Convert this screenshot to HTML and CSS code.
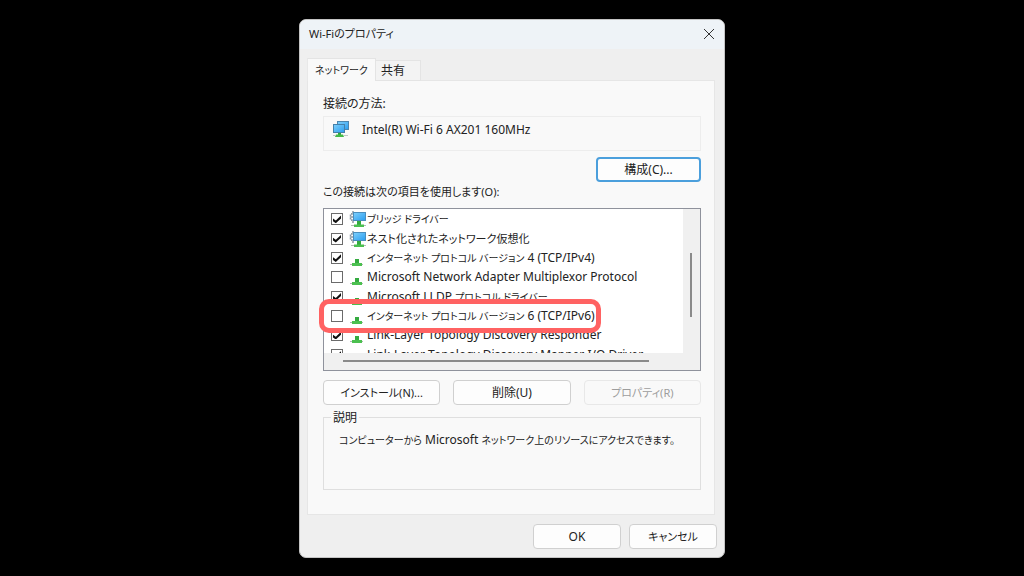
FILE: index.html
```
<!DOCTYPE html>
<html lang="ja">
<head>
    <meta charset="UTF-8">
    <meta name="viewport" content="width=device-width, initial-scale=1.0">
    <title>Wi-Fiのプロパティ</title>
    <link rel="stylesheet" href="styles.css">
</head>
<body>
    <svg class="symbols" aria-hidden="true">
        <defs>
            <linearGradient id="screen" x1="0" y1="0" x2="1" y2="1">
                <stop offset="0" stop-color="#7fd0fb"/>
                <stop offset="1" stop-color="#2a9df0"/>
            </linearGradient>
            <symbol id="adapter" viewBox="0 0 18 18">
                <rect x="5.5" y="1.5" width="11" height="8" fill="url(#screen)" stroke="#4b86b0"/>
                <rect x="1.5" y="4.5" width="11" height="8" fill="url(#screen)" stroke="#4480aa"/>
                <path d="M6 13h3v2H6z" fill="#2fa53a"/>
                <path d="M4 14.500h7l1 2.500H3z" fill="#43ba48"/>
                <path d="M1 15h3v1H1zM12 15h4v1h-4z" fill="#c0c8c4"/>
            </symbol>
            <symbol id="service" viewBox="0 0 18 18">
                <path d="M5 2H3v2H1.500v2H3v2H1.500v2H3v2h2" fill="none" stroke="#8b98a3" stroke-width="1.500" stroke-dasharray="2 1"/>
                <rect x="4.500" y="2.500" width="12" height="8" fill="url(#screen)" stroke="#4b8ebd"/>
                <path d="M8 11h4v4H8z" fill="#35ab40"/>
                <path d="M5 14.500h10V17H5z" fill="#4cc050"/>
                <path d="M2 15h3v1H2zM15 15h2v1h-2z" fill="#b4bcb8"/>
            </symbol>
            <symbol id="protocol" viewBox="0 0 18 18">
                <path d="M6 10h4v4H6z" fill="#35ab40"/>
                <path d="M3 14h10v3H3z" fill="#4cc050"/>
                <path d="M1 15h2v1H1zM13 15h1v1h-1z" fill="#aeb8b0"/>
            </symbol>
        </defs>
    </svg>

    <main class="dialog">
        <header class="titlebar">
            <h1>Wi-Fiのプロパティ</h1>
            <button class="close" type="button" aria-label="閉じる">
                <svg viewBox="0 0 12 12"><path d="M1 1l10 10M11 1L1 11"/></svg>
            </button>
        </header>

        <div class="tabs" role="tablist">
            <button class="tab active" type="button" role="tab" aria-selected="true"><span class="kana">ネットワーク</span></button>
            <button class="tab" type="button" role="tab" aria-selected="false">共有</button>
        </div>

        <section class="panel">
            <p class="caption">接続の方法:</p>
            <div class="adapter">
                <svg class="icon"><use href="#adapter"/></svg>
                <span>Intel(R) Wi-Fi 6 AX201 160MHz</span>
            </div>
            <button class="btn configure" type="button">構成(C)...</button>

            <p class="caption small" id="items-label">この接続は次の項目を使用します(O):</p>
            <div class="list-wrap">
                <div class="listbox">
                    <div class="view">
                        <ul class="items" aria-labelledby="items-label">
                            <li><label><input type="checkbox" checked><svg class="icon"><use href="#service"/></svg><span class="kana">ブリッジ ドライバー</span></label></li>
                            <li><label><input type="checkbox" checked><svg class="icon"><use href="#service"/></svg><span class="small">ネスト化されたネットワーク仮想化</span></label></li>
                            <li><label><input type="checkbox" checked><svg class="icon"><use href="#protocol"/></svg><span><span class="kana">インターネット プロトコル バージョン</span> 4 (TCP/IPv4)</span></label></li>
                            <li><label><input type="checkbox"><svg class="icon"><use href="#protocol"/></svg>Microsoft Network Adapter Multiplexor Protocol</label></li>
                            <li><label><input type="checkbox" checked><svg class="icon"><use href="#protocol"/></svg><span>Microsoft LLDP <span class="kana">プロトコル ドライバー</span></span></label></li>
                            <li><label><input type="checkbox"><svg class="icon"><use href="#protocol"/></svg><span><span class="kana">インターネット プロトコル バージョン</span> 6 (TCP/IPv6)</span></label></li>
                            <li><label><input type="checkbox" checked><svg class="icon"><use href="#protocol"/></svg>Link-Layer Topology Discovery Responder</label></li>
                            <li><label><input type="checkbox" checked><svg class="icon"><use href="#protocol"/></svg>Link-Layer Topology Discovery Mapper I/O Driver</label></li>
                        </ul>
                    </div>
                    <div class="scroll-y"><span class="thumb"></span></div>
                    <div class="scroll-x"><span class="thumb"></span></div>
                </div>
                <div class="highlight"></div>
            </div>

            <div class="actions">
                <button class="btn" type="button"><span class="small">インストール(N)...</span></button>
                <button class="btn" type="button">削除(U)</button>
                <button class="btn" type="button" disabled><span class="small">プロパティ(R)</span></button>
            </div>

            <fieldset class="description">
                <legend>説明</legend>
                <p><span class="kana">コンピューターから</span> Microsoft <span class="kana">ネットワーク上のリソースにアクセスできます。</span></p>
            </fieldset>
        </section>

        <footer class="footer">
            <button class="btn" type="button">OK</button>
            <button class="btn" type="button"><span class="small">キャンセル</span></button>
        </footer>
    </main>
</body>
</html>
```
FILE: styles.css
```
* {
    box-sizing: border-box;
}
body {
    margin: 0;
    min-height: 100vh;
    display: flex;
    align-items: center;
    justify-content: center;
    background: #000;
    color: #222;
    font: 12px/20px "Noto Sans", "Noto Sans CJK JP", sans-serif;
    font-feature-settings: "palt";
}
button,
input {
    font: inherit;
    font-feature-settings: inherit;
    color: inherit;
    margin: 0;
}
h1,
p,
ul {
    margin: 0;
    padding: 0;
}
.small {
    font-size: 11px;
}
.kana {
    font-size: 10px;
}
.symbols {
    position: absolute;
    width: 0;
    height: 0;
}
.icon {
    width: 18px;
    height: 18px;
    flex: none;
}

/* window */
.dialog {
    width: 100%;
    max-width: 426px;
    padding: 0 9px 8px 7px;
    background: #efefef;
    border: 1px solid #c4c4c4;
    border-radius: 7px;
    overflow: hidden;
}
.titlebar {
    display: flex;
    align-items: center;
    justify-content: space-between;
    height: 29px;
    margin: 0 -9px 9px -7px;
    padding: 0 8px 0 9px;
    background: #eef3f7;
}
.titlebar h1 {
    font-size: 11px;
    font-weight: 400;
}
.close {
    display: flex;
    padding: 1px;
    border: 0;
    background: none;
}
.close svg {
    width: 12px;
    height: 12px;
    fill: none;
    stroke: #333;
}

/* tabs */
.tabs {
    display: flex;
    align-items: flex-end;
    margin-bottom: -1px;
}
.tab {
    height: 21px;
    padding: 0 15px 0 5px;
    line-height: 20px;
    background: #f3f3f3;
    border: 1px solid #e4e4e4;
    border-left: 0;
}
.tab.active {
    position: relative;
    height: 23px;
    padding: 0 7px;
    background: #f9f9f9;
    border-left: 1px solid #e8e8e8;
    border-bottom: 0;
}
.panel {
    padding: 13px 13px 24px 15px;
    background: #f9f9f9;
    border: 1px solid #e6e6e6;
}
.adapter {
    display: flex;
    gap: 12px;
    height: 35px;
    margin: 2px 0 6px;
    padding: 3px 8px;
    border: 1px solid #ededed;
}

/* buttons */
.btn {
    height: 25px;
    padding: 1px 8px 0;
    line-height: 20px;
    background: #fdfdfd;
    border: 1px solid #d0d0d0;
    border-radius: 4px;
}
.btn:disabled {
    color: #9d9d9d;
    background: #f9f9f9;
    border-color: #e8e8e8;
}
.configure {
    display: block;
    width: 105px;
    margin-left: auto;
    border: 2px solid #4b9fdc;
}

/* item list */
.list-wrap {
    position: relative;
    margin: 6px 0 9px;
}
.listbox {
    display: grid;
    grid-template-columns: 1fr 17px;
    grid-template-rows: 144px 17px;
    background: #f0f0f0;
    border: 1px solid #8f929c;
}
.view {
    overflow: hidden;
    background: #fff;
}
.items {
    display: grid;
    grid-template-rows: repeat(8, 1fr);
    height: 156px;
    padding-top: 1px;
    list-style: none;
}
.items li {
    min-height: 0;
    white-space: nowrap;
}
.items label {
    display: flex;
    align-items: center;
    height: 100%;
    padding-left: 7px;
}
.items input {
    appearance: none;
    display: grid;
    place-items: center;
    width: 12px;
    height: 12px;
    margin-right: 6px;
    background: #fff;
    border: 1px solid #6b6b6b;
}
.items input:checked::before {
    content: "";
    width: 8px;
    height: 8px;
    background: #111;
    clip-path: polygon(0 40%, 35% 65%, 100% 5%, 100% 40%, 35% 100%, 0 75%);
}
.thumb {
    display: block;
    background: #8a8a8a;
}
.scroll-y {
    padding: 44px 8px 0 7px;
}
.scroll-y .thumb {
    height: 64px;
}
.scroll-x {
    padding: 7px 34px 0 19px;
}
.scroll-x .thumb {
    height: 2px;
}
.highlight {
    position: absolute;
    top: 91px;
    left: -4px;
    width: 282px;
    height: 34px;
    border: 5px solid #ff6262;
    border-radius: 10px;
}

.actions {
    display: grid;
    grid-template-columns: repeat(3, 1fr);
    gap: 13px;
}
.description {
    min-height: 82px;
    margin: 3px 0 0;
    padding: 2px 15px;
    border: 1px solid #dfdfdf;
}
.description legend {
    margin-left: -8px;
    padding: 0 2px;
}
.footer {
    display: grid;
    grid-template-columns: 88px 88px;
    justify-content: end;
    gap: 8px;
    margin-right: -2px;
    padding-top: 9px;
}
```
